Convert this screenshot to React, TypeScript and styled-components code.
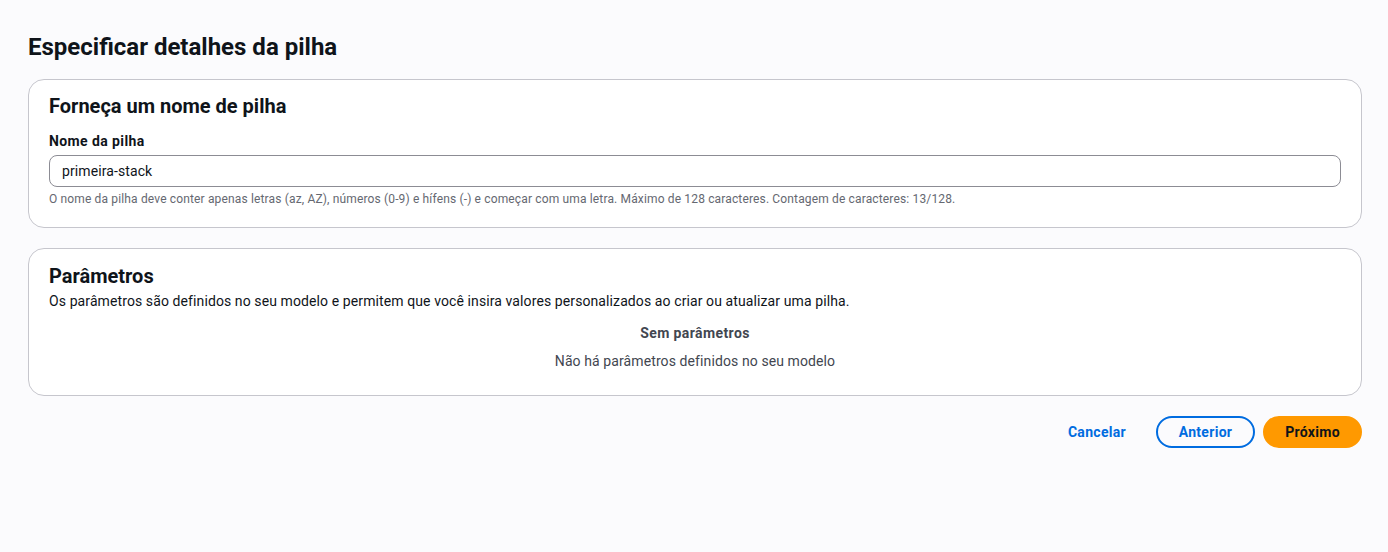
import React from "react";
import styled, { createGlobalStyle } from "styled-components";

const GlobalStyle = createGlobalStyle`
    body {
        margin: 0;
        background: #fbfbfd;
        font-family: Roboto, "Noto Sans", Arial, sans-serif;
        color: #0f141a;
    }
`;

export default function App(): React.ReactElement {
    return (
        <>
            <GlobalStyle />
            <Page>
                <PageTitle>Especificar detalhes da pilha</PageTitle>

                <Card $second={false}>
                    <CardTitle>Forneça um nome de pilha</CardTitle>
                    <Label htmlFor="stack-name">Nome da pilha</Label>
                    <Input id="stack-name" defaultValue="primeira-stack" />
                    <Hint>
                        O nome da pilha deve conter apenas letras (az, AZ), números (0-9) e hífens (-) e começar com uma
                        letra. Máximo de 128 caracteres. Contagem de caracteres: 13/128.
                    </Hint>
                </Card>

                <Card $second>
                    <CardTitle>Parâmetros</CardTitle>
                    <Description>
                        Os parâmetros são definidos no seu modelo e permitem que você insira valores personalizados ao
                        criar ou atualizar uma pilha.
                    </Description>
                    <Empty>
                        <EmptyTitle>Sem parâmetros</EmptyTitle>
                        <EmptyText>Não há parâmetros definidos no seu modelo</EmptyText>
                    </Empty>
                </Card>

                <Actions>
                    <Button $variant="link">Cancelar</Button>
                    <Button $variant="normal">Anterior</Button>
                    <Button $variant="primary">Próximo</Button>
                </Actions>
            </Page>
        </>
    );
}

const Page = styled.div`
    padding: 32px 26px 40px 28px;
    display: flex;
    flex-direction: column;
`;

const PageTitle = styled.h1`
    margin: 0 0 17px;
    font-size: 24px;
    line-height: 30px;
    font-weight: 700;
`;

const Card = styled.section<{ $second: boolean }>`
    background: #ffffff;
    border: 1px solid #c6c6cd;
    border-radius: 16px;
    padding: ${(p) => (p.$second ? "15px 20px 24px" : "14px 20px 20px")};
    margin-bottom: 20px;
    display: flex;
    flex-direction: column;
`;

const CardTitle = styled.h2`
    margin: 0;
    font-size: 20px;
    line-height: 24px;
    font-weight: 700;
`;

const Label = styled.label`
    margin-top: 13px;
    font-size: 14px;
    line-height: 20px;
    font-weight: 700;
    letter-spacing: 0.4px;
`;

const Input = styled.input`
    margin-top: 4px;
    height: 32px;
    box-sizing: border-box;
    border: 1px solid #8c8c94;
    border-radius: 8px;
    padding: 0 12px;
    font: inherit;
    font-size: 14px;
    letter-spacing: 0.1px;
    color: #0f141a;
    background: #ffffff;
    outline: none;
`;

const Hint = styled.div`
    margin-top: 4px;
    font-size: 12px;
    line-height: 16px;
    letter-spacing: 0.15px;
    color: #656871;
`;

const Description = styled.p`
    margin: 3px 0 0;
    font-size: 14px;
    line-height: 20px;
    letter-spacing: 0.1px;
    color: #0f141a;
`;

const Empty = styled.div`
    margin-top: 12px;
    display: flex;
    flex-direction: column;
    align-items: center;
    gap: 8px;
    color: #424650;
    font-size: 14px;
    line-height: 20px;
    letter-spacing: 0.1px;
`;

const EmptyTitle = styled.div`
    font-weight: 700;
    letter-spacing: 0.4px;
`;

const EmptyText = styled.div``;

const Actions = styled.div`
    display: flex;
    justify-content: flex-end;
    align-items: center;
    gap: 8px;
`;

const Button = styled.button<{ $variant: "link" | "normal" | "primary" }>`
    height: 32px;
    box-sizing: border-box;
    padding: 0 20px;
    border-radius: 20px;
    font: inherit;
    font-size: 14px;
    font-weight: 700;
    letter-spacing: 0.3px;
    cursor: pointer;
    border: 2px solid
        ${(p) => (p.$variant === "normal" ? "#006ce0" : p.$variant === "primary" ? "#ff9900" : "transparent")};
    background: ${(p) => (p.$variant === "primary" ? "#ff9900" : "transparent")};
    color: ${(p) => (p.$variant === "primary" ? "#0f141a" : "#006ce0")};
    min-width: ${(p) => (p.$variant === "link" ? "auto" : "99px")};
    margin-right: ${(p) => (p.$variant === "link" ? "0" : "0")};
`;
